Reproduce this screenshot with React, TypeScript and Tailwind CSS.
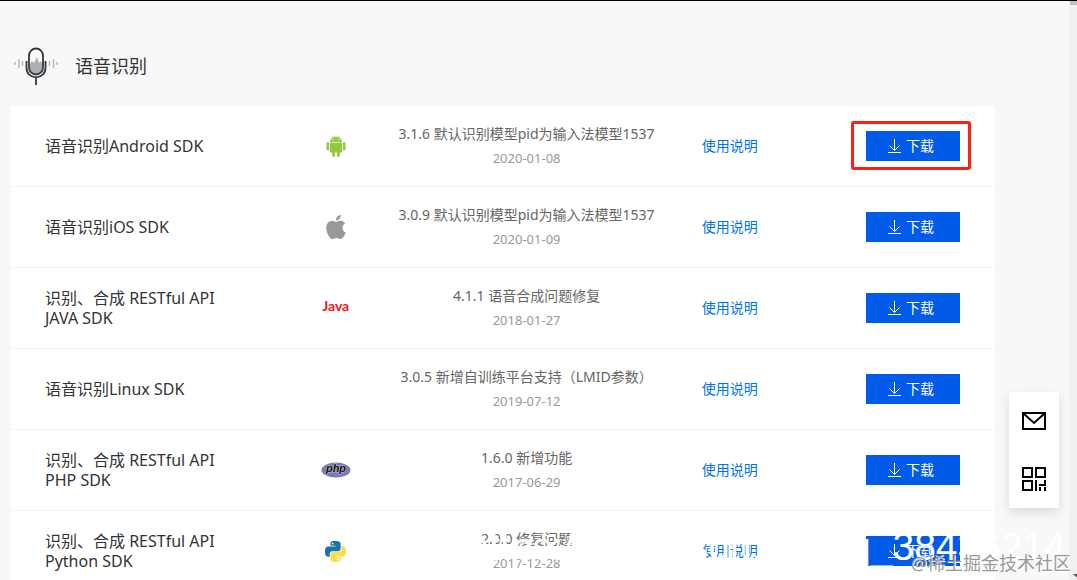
import type { ReactNode } from "react";

interface Sdk {
  name: string[];
  icon: ReactNode;
  version: string;
  date: string;
  highlighted?: boolean;
}

function AndroidIcon() {
  return (
    <svg width="20" height="22" viewBox="0 0 20 22" fill="#97c93d" className="mx-auto" aria-hidden="true">
      <path d="M4 7.2C4 4.8 5.3 3.2 7.1 2.3L6 .5l.4-.3 1.2 1.9C9 1.6 11 1.6 12.4 2.1L13.6.2l.4.3-1.1 1.8C14.700 3.200 16 4.800 16 7.200z" />
      <circle cx="7.2" cy="4.7" r=".6" fill="#fff" />
      <circle cx="12.8" cy="4.7" r=".6" fill="#fff" />
      <path d="M4 7.8h12V16.200a1.300 1.300 0 0 1-1.300 1.300H13.900v3a1.400 1.400 0 0 1-2.800 0v-3H8.900v3a1.400 1.400 0 0 1-2.800 0v-3H5.300A1.300 1.300 0 0 1 4 16.200z" />
      <rect x="0.5" y="7.3" width="2.7" height="8" rx="1.3" />
      <rect x="16.8" y="7.3" width="2.7" height="8" rx="1.3" />
    </svg>
  );
}

function AppleIcon() {
  return (
    <svg width="20" height="24" viewBox="2 0 20 24" fill="#999" className="mx-auto" aria-hidden="true">
      <path d="M12.152 6.896c-.948 0-2.415-1.078-3.960-1.040-2.040.027-3.910 1.183-4.961 3.014-2.117 3.675-.546 9.103 1.519 12.090 1.013 1.454 2.208 3.090 3.792 3.039 1.520-.065 2.090-.987 3.935-.987 1.831 0 2.350.987 3.960.948 1.637-.026 2.676-1.480 3.676-2.948 1.156-1.688 1.636-3.325 1.662-3.415-.039-.013-3.182-1.221-3.220-4.857-.026-3.040 2.480-4.494 2.597-4.559-1.429-2.090-3.623-2.324-4.390-2.376-2-.156-3.675 1.090-4.610 1.090zM15.530 3.830c.843-1.012 1.400-2.427 1.245-3.830-1.207.052-2.662.805-3.532 1.818-.780.896-1.454 2.338-1.273 3.714 1.338.104 2.715-.688 3.559-1.701" />
    </svg>
  );
}

function PhpIcon() {
  return (
    <svg width="30" height="16" viewBox="0 0 30 16" className="mx-auto" aria-hidden="true">
      <ellipse cx="15" cy="8" rx="14.5" ry="7.6" fill="#777bb3" />
      <text x="15" y="10" textAnchor="middle" fontSize="11" fontWeight="bold" fontStyle="italic" fontFamily="'Liberation Sans', sans-serif" fill="#111" stroke="#c5c7e2" strokeWidth="1" paintOrder="stroke">
        php
      </text>
    </svg>
  );
}

function PythonIcon() {
  return (
    <svg width="21" height="21" viewBox="0 0 24 24" className="mx-auto" aria-hidden="true">
      <path fill="#1574a8" d="M14.250.180l.900.200.730.260.590.300.450.320.340.340.250.340.160.330.100.300.040.260.020.200-.010.130V8.500l-.050.630-.130.550-.210.460-.260.380-.300.310-.330.250-.350.190-.350.140-.330.100-.300.070-.260.040-.210.020H8.770l-.690.050-.590.140-.500.220-.410.270-.330.320-.270.350-.200.360-.150.370-.100.350-.070.320-.040.270-.020.210v3.060H3.170l-.210-.030-.280-.070-.320-.120-.350-.180-.360-.260-.360-.360-.350-.460-.320-.590-.280-.730-.210-.880-.140-1.050-.050-1.230.060-1.220.160-1.040.240-.870.320-.710.360-.570.400-.440.420-.330.420-.240.400-.160.360-.100.320-.050.240-.010h.160l.060.010h8.160v-.830H6.180l-.010-2.750-.020-.370.050-.340.110-.310.170-.280.250-.260.310-.230.380-.200.440-.180.510-.150.580-.120.640-.100.710-.060.770-.040.840-.020 1.270.050zm-6.300 1.980l-.230.330-.080.410.080.410.230.340.330.220.410.090.410-.090.330-.220.230-.340.080-.410-.080-.410-.230-.330-.330-.220-.410-.090-.410.090z" />
      <path fill="#ffdb4d" d="M21.100 6.110l.280.060.320.120.350.180.360.270.360.350.350.470.320.590.280.730.210.880.140 1.040.050 1.230-.060 1.230-.160 1.040-.240.860-.320.710-.360.570-.400.450-.420.330-.420.240-.400.160-.360.090-.320.050-.240.020-.160-.010h-8.220v.820h5.840l.010 2.760.020.360-.050.340-.110.310-.170.290-.250.250-.310.240-.380.200-.440.170-.510.150-.580.130-.640.090-.710.070-.770.040-.840.010-1.270-.040-1.070-.140-.900-.200-.730-.250-.590-.300-.450-.330-.340-.340-.250-.340-.160-.330-.100-.300-.040-.250-.020-.200.010-.130v-5.340l.050-.640.130-.540.210-.460.260-.380.300-.320.330-.240.350-.200.350-.140.330-.100.300-.060.260-.040.210-.020.130-.010h5.840l.690-.050.590-.140.500-.210.410-.280.330-.320.270-.350.200-.360.150-.360.100-.350.070-.320.040-.280.020-.210V6.070h2.090l.140.010zm-6.470 14.250l-.230.330-.080.410.080.410.230.330.330.230.410.080.410-.080.330-.230.230-.330.080-.410-.080-.410-.230-.330-.330-.230-.410-.080-.410.080z" />
    </svg>
  );
}

function MicIcon() {
  return (
    <svg width="44" height="40" viewBox="0 0 44 40" fill="none" aria-hidden="true">
      <path d="M16 18l2-3 2 2 3-6 2 6 2-2 1 3v5a6 6 0 0 1-12 0z" fill="#a9b0b5" />
      <rect x="15" y="2.500" width="14" height="26" rx="7" stroke="#33373b" strokeWidth="1.800" />
      <path d="M12.500 15v7c0 5.500 4 9.300 9.500 9.300s9.500-3.800 9.500-9.300v-7M22 32v7" stroke="#33373b" strokeWidth="1.800" />
      <path d="M1 16v3M5 13v9M8.500 15v5M35.500 15v5M39.500 13v9M43 16v3" stroke="#b4b8bb" strokeWidth="1.500" />
    </svg>
  );
}

function DownloadIcon() {
  return (
    <svg width="14" height="15" viewBox="0 0 14 15" fill="none" stroke="#fff" aria-hidden="true">
      <path d="M6.500 0v11M1.500 6.500l5 5 5-5M0 13.500h13" />
    </svg>
  );
}

function MailIcon() {
  return (
    <svg width="24" height="18" viewBox="0 0 24 18" fill="none" stroke="#000" strokeWidth="2" aria-hidden="true">
      <path d="M1 1h22v16H1zM1.500 1.500L12 11 22.500 1.500" />
    </svg>
  );
}

function QrIcon() {
  return (
    <svg width="24" height="24" viewBox="0 0 24 24" fill="none" stroke="#000" strokeWidth="2" aria-hidden="true">
      <path d="M1 1h9v9H1zM14 1h9v9h-9zM1 14h9v9H1zM14 13v11M17 18h7M23 13v6M18 20v4M23 20v4" />
    </svg>
  );
}

const sdks: Sdk[] = [
  { name: ["语音识别Android SDK"], icon: <AndroidIcon />, version: "3.1.6 默认识别模型pid为输入法模型1537", date: "2020-01-08", highlighted: true },
  { name: ["语音识别iOS SDK"], icon: <AppleIcon />, version: "3.0.9 默认识别模型pid为输入法模型1537", date: "2020-01-09" },
  {
    name: ["识别、合成 RESTful API", "JAVA SDK"],
    icon: <span className="block pb-1 font-[Lato,sans-serif] text-sm leading-5 font-bold text-[#f5141e]">Java</span>,
    version: "4.1.1 语音合成问题修复",
    date: "2018-01-27",
  },
  { name: ["语音识别Linux SDK"], icon: null, version: "3.0.5 新增自训练平台支持（LMID参数）", date: "2019-07-12" },
  { name: ["识别、合成 RESTful API", "PHP SDK"], icon: <PhpIcon />, version: "1.6.0 新增功能", date: "2017-06-29" },
  { name: ["识别、合成 RESTful API", "Python SDK"], icon: <PythonIcon />, version: "2.0.0 修复问题", date: "2017-12-28" },
];

function SdkRow({ sdk }: { sdk: Sdk }) {
  return (
    <tr className="h-[81px] *:border-b *:border-[#f3f3f3]">
      <th scope="row" className="pl-[34px] text-left text-base leading-5 font-normal text-[#333]">
        {sdk.name.map((line) => (
          <span key={line} className="block whitespace-nowrap">{line}</span>
        ))}
      </th>
      <td className="text-center">{sdk.icon}</td>
      <td className="text-center whitespace-nowrap">
        <p className="text-sm leading-6 text-[#666]">{sdk.version}</p>
        <p className="text-[13px] leading-6 text-[#999]">{sdk.date}</p>
      </td>
      <td className="text-center text-sm">
        <a href="#docs" className="text-[#0073eb]">使用说明</a>
      </td>
      <td className="relative pr-[35px]">
        <button type="button" className="ml-auto flex h-[30px] w-[94px] items-center justify-center gap-1 bg-[#005be8] pr-1 text-sm text-white">
          <DownloadIcon />
          下载
        </button>
        {sdk.highlighted && <div className="absolute top-[15px] right-6 h-[49px] w-[120px] rounded-[3px] border-3 border-[#ff1f12]" />}
      </td>
    </tr>
  );
}

export default function App() {
  return (
    <div className="relative flex h-screen overflow-hidden border-t border-black bg-[#f8f8f8] font-['Noto_Sans','Noto_Sans_CJK_SC',sans-serif]">
      <main className="min-w-0 flex-1 pr-[74px] pl-[11px]">
        <header className="flex h-[105px] items-center gap-[17px] pt-[25px] pl-[3px]">
          <MicIcon />
          <h1 className="text-lg text-[#333]">语音识别</h1>
        </header>
        <table className="w-full table-fixed border-separate border-spacing-0 bg-white">
          <colgroup>
            <col className="w-[28.5%]" />
            <col className="w-[9%]" />
            <col className="w-[29.8%]" />
            <col className="w-[11.5%]" />
            <col className="w-[21.2%]" />
          </colgroup>
          <tbody>
            {sdks.map((sdk) => (
              <SdkRow key={sdk.name.join(" ")} sdk={sdk} />
            ))}
          </tbody>
        </table>
      </main>

      <div className="flex w-2 shrink-0 flex-col items-end justify-between bg-[#f1f1f1]">
        <div className="h-1 w-[7px] bg-[#c1c1c1]" />
        <svg width="4" height="6" viewBox="0 0 4 6" fill="#505050" aria-hidden="true">
          <path d="M0 0h4v3.500z" />
        </svg>
      </div>

      <aside className="absolute right-[18px] bottom-[72px] flex w-[50px] flex-col bg-white shadow-[0_4px_10px_rgba(0,0,0,0.12)]">
        <button type="button" aria-label="邮件" className="flex h-[58px] items-center justify-center">
          <MailIcon />
        </button>
        <button type="button" aria-label="二维码" className="flex h-[58px] items-center justify-center">
          <QrIcon />
        </button>
      </aside>

      <p className="pointer-events-none absolute right-[11px] bottom-[9px] font-['Liberation_Sans',sans-serif] text-[39px] leading-12 whitespace-nowrap text-white">
        https://blog.csdn.net/qq_38436214
      </p>
      <p className="pointer-events-none absolute right-[6px] bottom-[5px] text-lg leading-6 whitespace-nowrap text-[#999] text-shadow-[1px_1px_0_#ffffff]">@稀土掘金技术社区</p>
    </div>
  );
}
